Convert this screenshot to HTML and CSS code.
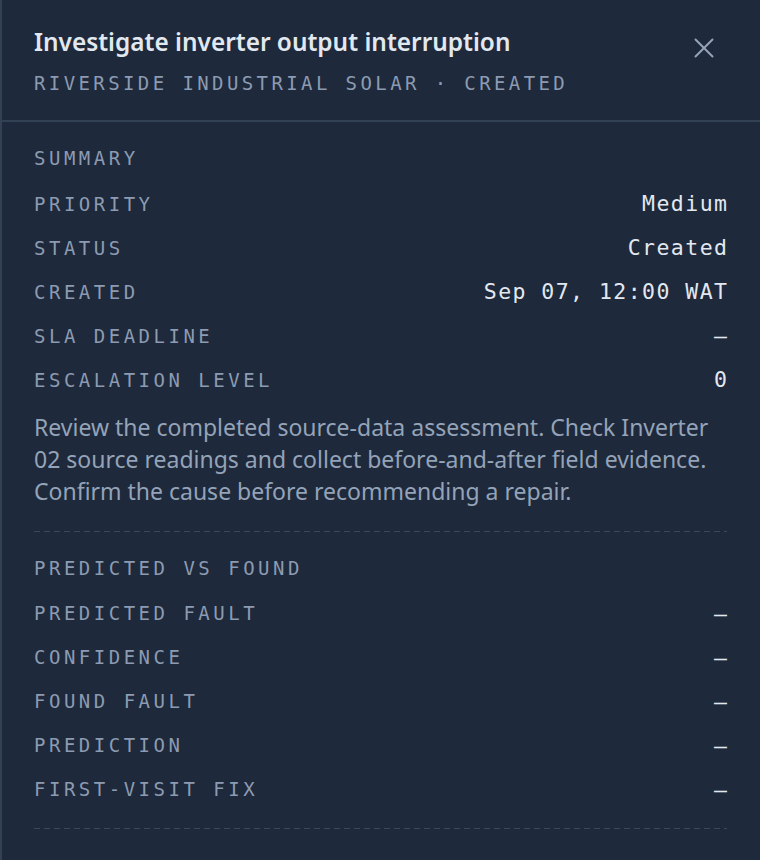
FILE: index.html
```html
<!DOCTYPE html>
<html lang="en">
<head>
<meta charset="utf-8">
<title>Work order</title>
<link rel="stylesheet" href="styles.css">
</head>
<body>
<aside class="panel">
  <header class="panel-head">
    <div class="head-text">
      <h1 class="title">Investigate inverter output interruption</h1>
      <div class="subtitle">RIVERSIDE INDUSTRIAL SOLAR · CREATED</div>
    </div>
    <button class="close" type="button" aria-label="Close">
      <svg viewBox="0 0 20 20" width="20" height="20" aria-hidden="true">
        <path d="M1.5 1.5 L18.5 18.5 M18.5 1.5 L1.5 18.5" stroke="currentColor" stroke-width="2" stroke-linecap="round" fill="none"/>
      </svg>
    </button>
  </header>

  <section class="section">
    <h2 class="section-title">SUMMARY</h2>
    <div class="row"><span class="label">PRIORITY</span><span class="value">Medium</span></div>
    <div class="row"><span class="label">STATUS</span><span class="value">Created</span></div>
    <div class="row"><span class="label">CREATED</span><span class="value">Sep 07, 12:00 WAT</span></div>
    <div class="row"><span class="label">SLA DEADLINE</span><span class="value">—</span></div>
    <div class="row"><span class="label">ESCALATION LEVEL</span><span class="value">0</span></div>
    <p class="note">Review the completed source-data assessment. Check Inverter 02 source readings and collect before-and-after field evidence. Confirm the cause before recommending a repair.</p>
  </section>

  <section class="section section-last">
    <h2 class="section-title">PREDICTED VS FOUND</h2>
    <div class="row"><span class="label">PREDICTED FAULT</span><span class="value">—</span></div>
    <div class="row"><span class="label">CONFIDENCE</span><span class="value">—</span></div>
    <div class="row"><span class="label">FOUND FAULT</span><span class="value">—</span></div>
    <div class="row"><span class="label">PREDICTION</span><span class="value">—</span></div>
    <div class="row"><span class="label">FIRST-VISIT FIX</span><span class="value">—</span></div>
  </section>
</aside>
</body>
</html>
```

FILE: styles.css
```css
html, body {
  margin: 0;
  padding: 0;
  background: #1e293b;
}

.panel {
  box-sizing: border-box;
  width: 760px;
  min-height: 860px;
  background: #1e293b;
  border-left: 2px solid #334155;
  font-family: "Noto Sans", "DejaVu Sans", sans-serif;
}

.panel-head {
  display: flex;
  justify-content: space-between;
  align-items: flex-start;
  padding: 27px 33px 25px 32px;
  border-bottom: 2px solid #334155;
}

.title {
  margin: 0;
  font-size: 24.4px;
  line-height: 30px;
  font-weight: 600;
  color: #e2e8f0;
}

.subtitle {
  margin-top: 14px;
  font-family: "DejaVu Sans Mono", "Liberation Mono", monospace;
  font-size: 19px;
  line-height: 24px;
  letter-spacing: 3.4px;
  color: #8c9bb2;
}

.close {
  display: flex;
  align-items: center;
  justify-content: center;
  width: 32px;
  height: 32px;
  margin-top: 5px;
  margin-right: 7px;
  padding: 0;
  border: 0;
  background: transparent;
  color: #94a3b8;
  cursor: pointer;
}

.section {
  margin: 0 33px 0 32px;
  padding: 24px 0 25px;
  background-image: repeating-linear-gradient(to right, #3c4859 0 6px, transparent 6px 10px);
  background-size: 100% 1px;
  background-repeat: no-repeat;
  background-position: left bottom;
}

.section-last {
  padding-bottom: 18px;
}

.section-title {
  margin: 0 0 11.5px;
  font-family: "DejaVu Sans Mono", "Liberation Mono", monospace;
  font-size: 19px;
  line-height: 24px;
  font-weight: 400;
  letter-spacing: 3.5px;
  color: #8c9bb2;
}

.row {
  display: flex;
  justify-content: space-between;
  align-items: center;
  height: 44px;
}

.label {
  font-family: "DejaVu Sans Mono", "Liberation Mono", monospace;
  font-size: 19px;
  letter-spacing: 3.5px;
  color: #8c9bb2;
}

.value {
  font-family: "DejaVu Sans Mono", "Liberation Mono", monospace;
  font-size: 21.5px;
  letter-spacing: 1.45px;
  margin-right: -1.45px;
  color: #e2e8f0;
}

.note {
  margin: 9px 0 0;
  font-size: 23px;
  line-height: 32px;
  color: #94a3b8;
}
```
